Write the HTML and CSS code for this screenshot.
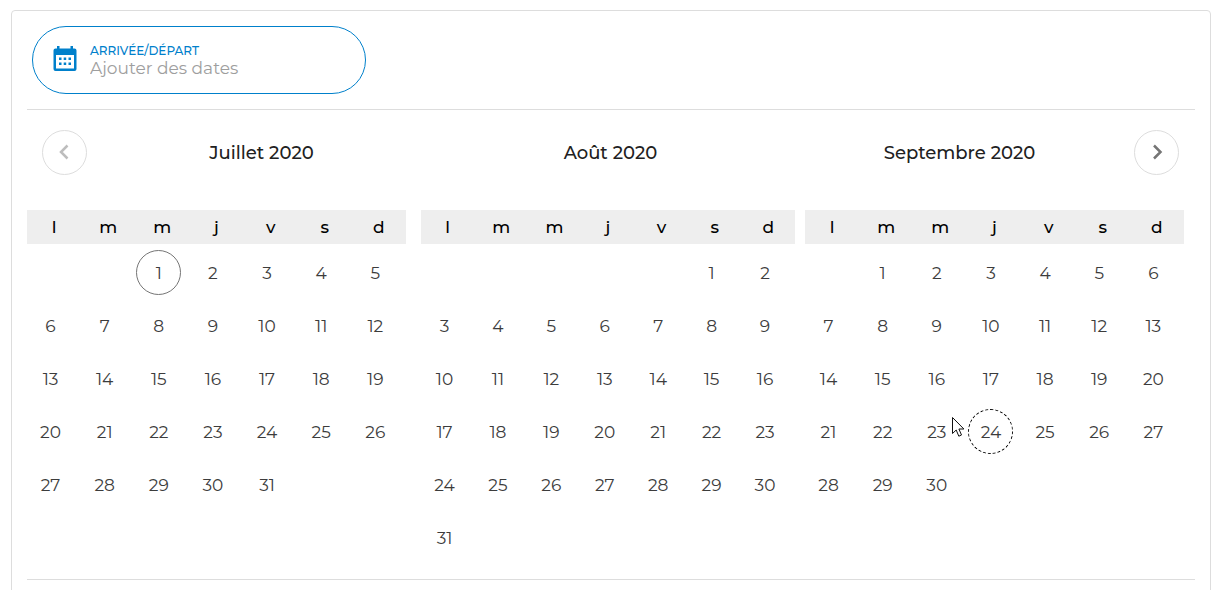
FILE: index.html
```
<!DOCTYPE html>
<html lang="fr">
<head>
  <meta charset="UTF-8">
  <meta name="viewport" content="width=device-width, initial-scale=1.0">
  <title>Calendrier</title>
  <link rel="stylesheet" href="styles.css">
</head>
<body>
  <div class="card">
    <div class="search-bar">
      <div class="date-field">
        <svg class="date-icon" width="24" height="28" viewBox="0 0 24 28" aria-hidden="true">
          <path fill="#0080cb" fill-rule="evenodd" d="M4 0h2.500v2.500h11V0H20v2.500h1.500a2 2 0 0 1 2 2V23a2 2 0 0 1-2 2h-19a2 2 0 0 1-2-2V4.500a2 2 0 0 1 2-2H4zM3 9v13.500h18V9z"/>
          <path fill="#0080cb" d="M6 11.500h2.500V14H6zM10.700 11.500h2.500V14h-2.500zM15.500 11.500H18V14h-2.500zM6 16.500h2.500V19H6zM10.700 16.500h2.500V19h-2.500zM15.500 16.500H18V19h-2.500z"/>
        </svg>
        <div class="date-text">
          <label for="dates">ARRIVÉE/DÉPART</label>
          <input type="text" id="dates" placeholder="Ajouter des dates">
        </div>
      </div>
    </div>

    <div class="calendar">
      <div class="month-nav">
        <button type="button" class="nav-btn" aria-label="Mois précédent" disabled>
          <svg width="13" height="17" viewBox="0 0 13 17"><path d="M9.500 1.500L3 8l6.500 6.500"/></svg>
        </button>
        <div class="month-titles">
          <h2>Juillet 2020</h2>
          <h2>Août 2020</h2>
          <h2>Septembre 2020</h2>
        </div>
        <button type="button" class="nav-btn" aria-label="Mois suivant">
          <svg width="13" height="17" viewBox="0 0 13 17"><path d="M4 1.500L10.500 8 4 14.500"/></svg>
        </button>
      </div>
      <div class="months" id="months"></div>
    </div>
  </div>

  <script>
    const weekdays = ['l', 'm', 'm', 'j', 'v', 's', 'd'];

    // offset = number of empty cells before the 1st
    const months = [
      { name: 'Juillet 2020', offset: 2, days: 31, today: 1 },
      { name: 'Août 2020', offset: 5, days: 31 },
      { name: 'Septembre 2020', offset: 1, days: 30, hovered: 24 }
    ];

    const pointer = `
      <svg class="pointer" width="13" height="21" viewBox="0 0 13 21" aria-hidden="true">
        <path d="M.5.500v16l3.700-3.500 2.600 6.200 2.700-1.200-2.600-6h5z" fill="#fff" stroke="#111"/>
      </svg>`;

    function dayCell(month, day) {
      if (day < 1 || day > month.days) {
        return '<td></td>';
      }
      let cls = 'day';
      if (day === month.today) cls += ' today';
      if (day === month.hovered) cls += ' hovered';
      const extra = day === month.hovered ? pointer : '';
      return `<td><button type="button" class="${cls}">${day}${extra}</button></td>`;
    }

    function renderMonth(month) {
      let rows = '';
      for (let start = 1 - month.offset; start <= month.days; start += 7) {
        rows += '<tr>' + weekdays.map((w, i) => dayCell(month, start + i)).join('') + '</tr>';
      }
      return `
        <div class="month">
          <table aria-label="${month.name}">
            <thead><tr>${weekdays.map(w => `<th scope="col">${w}</th>`).join('')}</tr></thead>
            <tbody>${rows}</tbody>
          </table>
        </div>`;
    }

    document.getElementById('months').innerHTML = months.map(renderMonth).join('');
  </script>
</body>
</html>
```
FILE: styles.css
```
* {
  box-sizing: border-box;
}

body {
  margin: 10px 11px 0;
  background-color: #fff;
  font-family: Montserrat, Inter, sans-serif;
  font-size: 17px;
}

.card {
  min-height: 600px;
  padding: 15px;
  border: 1px solid #ddd;
  border-radius: 4px;
}

.search-bar {
  padding: 0 5px 15px;
  border-bottom: 1px solid #ddd;
}

.date-field {
  display: flex;
  align-items: center;
  gap: 13px;
  width: 334px;
  max-width: 100%;
  height: 68px;
  padding: 0 20px;
  border: 1px solid #0080cb;
  border-radius: 34px;
}

.date-text {
  flex: 1;
  min-width: 0;
  padding-top: 2px;
}

.date-text label {
  display: block;
  color: #0080cb;
  font-size: 12px;
  font-weight: 500;
  line-height: 14px;
}

.date-text input {
  display: block;
  width: 100%;
  height: 20px;
  padding: 0;
  border: none;
  outline: none;
  background: none;
  font-family: inherit;
  font-size: 17px;
}

.date-text input::placeholder {
  color: #9e9e9e;
  opacity: 1;
}

.calendar {
  padding: 20px 0 15px;
  border-bottom: 1px solid #ddd;
}

.month-nav {
  display: flex;
  align-items: center;
  padding: 0 16px 0 15px;
  margin-bottom: 35px;
}

.nav-btn {
  display: flex;
  align-items: center;
  justify-content: center;
  width: 45px;
  height: 45px;
  padding: 0;
  border: 1px solid #ddd;
  border-radius: 50%;
  background-color: #fff;
  cursor: pointer;
}

.nav-btn path {
  fill: none;
  stroke: #757575;
  stroke-width: 2.5;
}

.nav-btn:disabled {
  cursor: default;
}

.nav-btn:disabled path {
  stroke: #bdbdbd;
}

.month-titles {
  flex: 1;
  display: grid;
  grid-template-columns: repeat(3, 1fr);
}

.month-titles h2 {
  margin: 0;
  color: #212121;
  font-size: 18px;
  font-weight: 500;
  line-height: 24px;
  text-align: center;
}

.months {
  display: grid;
  grid-template-columns: repeat(3, 1fr);
  align-items: start;
  gap: 10px;
  padding-right: 11px;
}

.month:nth-child(2) {
  padding-left: 5px;
}

table {
  width: 100%;
  table-layout: fixed;
  border-collapse: collapse;
}

th {
  height: 34px;
  padding: 0;
  background-color: #eee;
  color: #000;
  font-weight: 500;
  text-align: center;
}

td {
  height: 53px;
  padding: 4px 0 4px 1px;
}

tbody tr:first-child td {
  height: 55px;
  padding-top: 6px;
}

.day {
  position: relative;
  display: block;
  width: 45px;
  height: 45px;
  padding: 0;
  border: 1px solid transparent;
  border-radius: 50%;
  background: none;
  color: #3c3c3c;
  font-family: inherit;
  font-size: 17px;
  text-align: center;
  cursor: pointer;
}

.today {
  border-color: #757575;
}

.hovered {
  border: 1px dashed #000;
}

/* mouse pointer lying over the calendar */
.pointer {
  position: absolute;
  top: 7px;
  left: -17px;
}
```
